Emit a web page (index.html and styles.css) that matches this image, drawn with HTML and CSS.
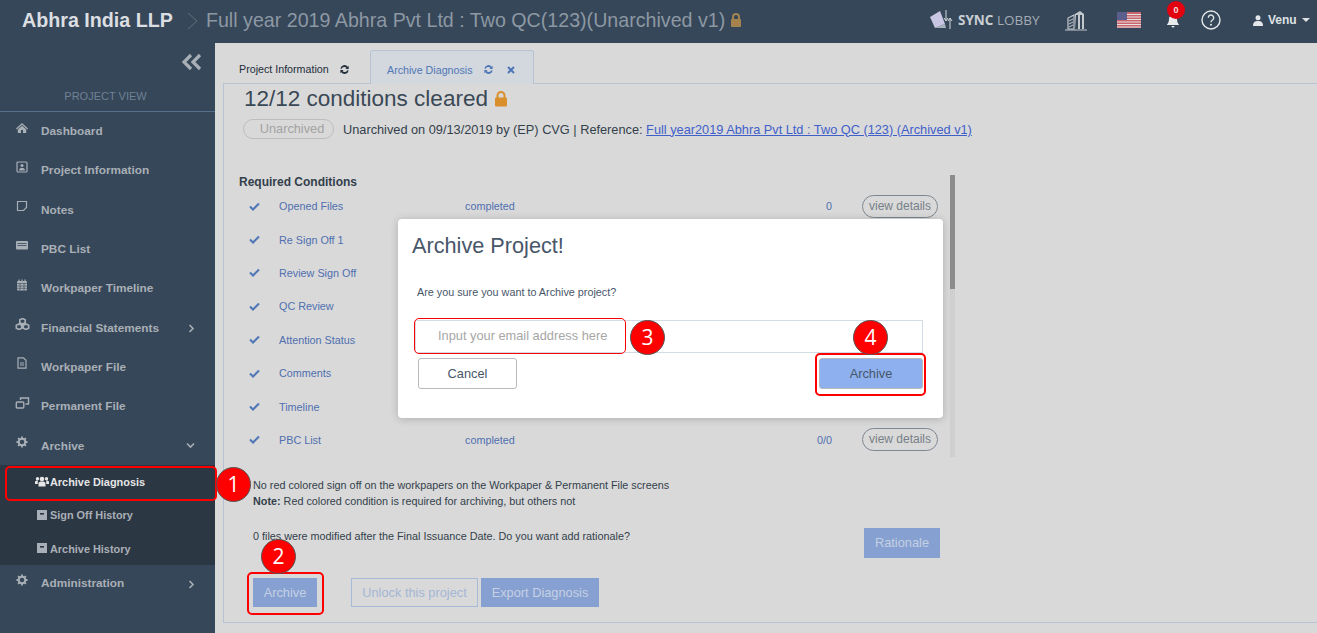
FILE: index.html
```html
<!DOCTYPE html>
<html lang="en">
<head>
<meta charset="UTF-8">
<meta name="viewport" content="width=device-width, initial-scale=1.0">
<title>Archive Diagnosis</title>
<link rel="stylesheet" href="styles.css">
</head>
<body>
<header class="topbar">
    <span class="brand">Abhra India LLP</span>
    <svg class="crumb" width="12" height="18" viewBox="0 0 12 18"><path d="M1 1l9 8-9 8" fill="none" stroke="#5f6f7f" stroke-width="1"/></svg>
    <span class="project-title">Full year 2019 Abhra Pvt Ltd : Two QC(123)(Unarchived v1)</span>
    <svg class="title-lock" width="12" height="14" viewBox="0 0 12 14"><path d="M3 6V4a3 3 0 0 1 6 0v2" fill="none" stroke="#a5834f" stroke-width="2"/><rect x="1" y="6" width="10" height="8" rx="1" fill="#a5834f"/></svg>
    <div class="top-right">
        <svg class="logo-mark" width="26" height="22" viewBox="0 0 26 22">
            <path d="M1 8l10-6 5 13-10 4z" fill="#c9c6e4"/><path d="M6 19l10-4 1 4H8z" fill="#aab2bc"/>
            <path d="M17 1v10M15 9l2 3 2-3M21 20V10M19 12l2-3 2 3" fill="none" stroke="#d5d9dd" stroke-width="1"/>
        </svg>
        <span class="logo-text"><b>SYNC</b> LOBBY</span>
        <svg class="building" width="24" height="22" viewBox="0 0 24 22">
            <path d="M1 21h22" stroke="#c3c8cd" stroke-width="1"/>
            <path d="M4 20V9l6-3v14z" fill="none" stroke="#c3c8cd" stroke-width="1.2"/>
            <path d="M11 20V5l5-3 4 3v15h-2V6h-2v14h-2V6h-2z" fill="#c3c8cd"/>
            <path d="M5 12l4-2M5 15l4-2M5 18l4-2" stroke="#c3c8cd" stroke-width="1"/>
        </svg>
        <svg class="flag" width="24" height="16" viewBox="0 0 24 16">
            <rect width="24" height="16" fill="#c9646c"/>
            <path d="M0 2.5h24M0 5h24M0 7.5h24M0 10h24M0 12.500h24M0 15h24" stroke="#e6e2e2" stroke-width="1.200"/>
            <rect width="10" height="8" fill="#5b5f8e"/>
        </svg>
        <div class="bell-wrap">
            <svg width="14" height="14" viewBox="0 0 14 14"><path d="M7 1a4 4 0 0 0-4 4c0 4-2 5-2 6h12c0-1-2-2-2-6a4 4 0 0 0-4-4zM5.500 12a1.500 1.500 0 0 0 3 0z" fill="#e9ebed"/></svg>
            <span class="bell-count">0</span>
        </div>
        <svg class="help" width="20" height="20" viewBox="0 0 20 20">
            <circle cx="10" cy="10" r="9" fill="none" stroke="#e4e7e9" stroke-width="1.400"/>
            <path d="M7.300 7.800a2.700 2.700 0 1 1 4.200 2.200c-1 .7-1.500 1.100-1.500 2.300" fill="none" stroke="#e4e7e9" stroke-width="1.400"/>
            <circle cx="10" cy="14.800" r="1" fill="#e4e7e9"/>
        </svg>
        <div class="user">
            <svg width="10" height="11" viewBox="0 0 10 11"><circle cx="5" cy="2.700" r="2.500" fill="#e4e7e9"/><path d="M0 11c0-4 2-5 5-5s5 1 5 5z" fill="#e4e7e9"/></svg>
            <span>Venu</span>
            <i class="caret"></i>
        </div>
    </div>
</header>

<div class="layout">
    <aside class="sidebar">
        <div class="collapse">
            <svg width="20" height="18" viewBox="0 0 20 18"><path d="M9 2L2 9l7 7M18 2l-7 7 7 7" fill="none" stroke="#a9afb6" stroke-width="3.200"/></svg>
        </div>
        <div class="side-title">PROJECT VIEW</div>
        <nav class="menu">
            <a class="menu-item"><svg class="mi" viewBox="0 0 12 12"><path d="M6 1L0 6.500l.8.900L6 2.800l5.200 4.600.8-.9zM1.800 7.500V11H5V8h2v3h3.200V7.500L6 3.800z" fill="#a9afb6"/></svg>Dashboard</a>
            <a class="menu-item"><svg class="mi" viewBox="0 0 12 12"><rect x="1" y="1" width="10" height="10" rx="1" fill="none" stroke="#a9afb6" stroke-width="1.200"/><circle cx="6" cy="4.500" r="1.500" fill="#a9afb6"/><path d="M3 9.500c0-2 1.500-2.500 3-2.500s3 .5 3 2.500z" fill="#a9afb6"/></svg>Project Information</a>
            <a class="menu-item"><svg class="mi" viewBox="0 0 12 12"><path d="M1.500 1.500h9v6l-3 3h-6z" fill="none" stroke="#a9afb6" stroke-width="1.200"/></svg>Notes</a>
            <a class="menu-item"><svg class="mi" viewBox="0 0 12 12"><rect x="0" y="2" width="12" height="8.500" rx="1" fill="#a9afb6"/><path d="M1.500 4.500h9M1.500 6.500h9" stroke="#364759" stroke-width=".8"/></svg>PBC List</a>
            <a class="menu-item"><svg class="mi" viewBox="0 0 12 12"><rect x="1" y="2" width="10" height="9.500" rx="1" fill="#a9afb6"/><path d="M3 .5v2.500M6 .5v2.500M9 .5v2.500" stroke="#a9afb6" stroke-width="1.200"/><path d="M1 4.500h10M1 7h10M1 9.300h10M4 4.500v7M8 4.500v7" stroke="#364759" stroke-width=".6"/></svg>Workpaper Timeline</a>
            <a class="menu-item has-arrow"><svg class="mi mi-wide" viewBox="0 0 14 12"><path d="M7 .5l2.700 1.200v3L7 6 4.300 4.700v-3zM3.500 6l2.700 1.200v3L3.500 11.500.8 10.200v-3zM10.500 6l2.700 1.200v3l-2.700 1.300-2.700-1.300v-3z" fill="#364759" stroke="#a9afb6" stroke-width="1.600"/></svg>Financial Statements<svg class="arrow" width="7" height="9" viewBox="0 0 7 9"><path d="M1.500 1l3.500 3.500L1.500 8" fill="none" stroke="#a9afb6" stroke-width="1.600"/></svg></a>
            <a class="menu-item"><svg class="mi" viewBox="0 0 12 12"><path d="M2 .8h5.500L10 3.300V11.200H2z" fill="none" stroke="#a9afb6" stroke-width="1.200"/><path d="M4 6h4M4 8h4" stroke="#a9afb6" stroke-width="1.200"/></svg>Workpaper File</a>
            <a class="menu-item"><svg class="mi mi-wide" viewBox="0 0 14 12"><rect x=".8" y="5" width="7.500" height="6" rx="1" fill="none" stroke="#a9afb6" stroke-width="1.400"/><path d="M5 3V1h8v6h-3" fill="none" stroke="#a9afb6" stroke-width="1.400"/></svg>Permanent File</a>
            <a class="menu-item has-arrow"><svg class="mi" viewBox="0 0 12 12"><circle cx="6" cy="6" r="3.300" fill="none" stroke="#a9afb6" stroke-width="2"/><path d="M6 .5v2M6 9.500v2M.5 6h2M9.500 6h2M2.100 2.100l1.400 1.400M8.500 8.500l1.400 1.400M2.100 9.900l1.400-1.400M8.500 3.500l1.400-1.400" stroke="#a9afb6" stroke-width="1.800"/></svg>Archive<svg class="arrow" width="9" height="7" viewBox="0 0 9 7"><path d="M1 1.500l3.500 3.500L8 1.500" fill="none" stroke="#a9afb6" stroke-width="1.600"/></svg></a>
            <div class="submenu">
                <a class="sub-item active"><svg class="si" viewBox="0 0 14 11"><circle cx="7" cy="3" r="2.300" fill="#e6e6e6"/><circle cx="2.500" cy="2.800" r="1.700" fill="#e6e6e6"/><circle cx="11.500" cy="2.800" r="1.700" fill="#e6e6e6"/><path d="M3.500 10.500V7.500c0-1.500 1.500-2 3.500-2s3.500 .5 3.500 2v3zM0 8V6c0-1 1-1.500 2.800-1.500V8zM14 8V6c0-1-1-1.500-2.800-1.500V8z" fill="#e6e6e6"/></svg>Archive Diagnosis</a>
                <a class="sub-item"><svg class="si" viewBox="0 0 14 11"><rect x="2" y="0" width="10" height="10" fill="#a9afb6"/><rect x="5" y="3" width="4" height="1.600" fill="#2c3744"/></svg>Sign Off History</a>
                <a class="sub-item"><svg class="si" viewBox="0 0 14 11"><rect x="2" y="0" width="10" height="10" fill="#a9afb6"/><rect x="5" y="3" width="4" height="1.600" fill="#2c3744"/></svg>Archive History</a>
            </div>
            <a class="menu-item has-arrow last"><svg class="mi" viewBox="0 0 12 12"><circle cx="6" cy="6" r="3.300" fill="none" stroke="#a9afb6" stroke-width="2"/><path d="M6 .5v2M6 9.500v2M.5 6h2M9.500 6h2M2.100 2.100l1.400 1.400M8.500 8.500l1.400 1.400M2.100 9.900l1.400-1.400M8.500 3.500l1.400-1.400" stroke="#a9afb6" stroke-width="1.800"/></svg>Administration<svg class="arrow" width="7" height="9" viewBox="0 0 7 9"><path d="M1.500 1l3.500 3.500L1.500 8" fill="none" stroke="#a9afb6" stroke-width="1.600"/></svg></a>
        </nav>
    </aside>

    <main class="content">
        <div class="tabs">
            <div class="tab">Project Information
                <svg class="sync" viewBox="0 0 12 12"><path d="M1.500 5a4.500 4.500 0 0 1 8-2l1-1v3.500H7l1.200-1.200A3 3 0 0 0 3 5.200zM10.500 7a4.500 4.500 0 0 1-8 2l-1 1V6.500H5L3.800 7.700A3 3 0 0 0 9 6.800z" fill="#222e3a"/></svg>
            </div>
            <div class="tab tab-active">Archive Diagnosis
                <svg class="sync" viewBox="0 0 12 12"><path d="M1.500 5a4.500 4.500 0 0 1 8-2l1-1v3.500H7l1.200-1.200A3 3 0 0 0 3 5.200zM10.500 7a4.500 4.500 0 0 1-8 2l-1 1V6.500H5L3.800 7.700A3 3 0 0 0 9 6.800z" fill="#4f76b5"/></svg>
                <svg class="close" viewBox="0 0 8 8"><path d="M1 1l6 6M7 1L1 7" stroke="#4f76b5" stroke-width="2"/></svg>
            </div>
        </div>
        <section class="panel">
            <h1 class="cleared">12/12 conditions cleared
                <svg width="14" height="16" viewBox="0 0 14 16"><path d="M3.500 7V4.500a3.500 3.500 0 0 1 7 0V7" fill="none" stroke="#d98f2b" stroke-width="2"/><rect x="1" y="6.500" width="12" height="9" rx="1" fill="#d98f2b"/></svg>
            </h1>
            <div class="status-line">
                <span class="pill">Unarchived</span>
                <span>Unarchived on 09/13/2019 by (EP) CVG | Reference: <a class="ref">Full year2019 Abhra Pvt Ltd : Two QC (123) (Archived v1)</a></span>
            </div>
            <div class="req-wrap">
                <div class="req-table">
                    <h2 class="req-title">Required Conditions</h2>
                    <div class="cond"><svg class="chk" viewBox="0 0 11 9"><path d="M1 4.500l3 3 6-6" fill="none" stroke="#4f76b5" stroke-width="2"/></svg><span class="cond-name">Opened Files</span><span class="cond-status">completed</span><span class="cond-count">0</span><span class="details">view details</span></div>
                    <div class="cond"><svg class="chk" viewBox="0 0 11 9"><path d="M1 4.500l3 3 6-6" fill="none" stroke="#4f76b5" stroke-width="2"/></svg><span class="cond-name">Re Sign Off 1</span></div>
                    <div class="cond"><svg class="chk" viewBox="0 0 11 9"><path d="M1 4.500l3 3 6-6" fill="none" stroke="#4f76b5" stroke-width="2"/></svg><span class="cond-name">Review Sign Off</span></div>
                    <div class="cond"><svg class="chk" viewBox="0 0 11 9"><path d="M1 4.500l3 3 6-6" fill="none" stroke="#4f76b5" stroke-width="2"/></svg><span class="cond-name">QC Review</span></div>
                    <div class="cond"><svg class="chk" viewBox="0 0 11 9"><path d="M1 4.500l3 3 6-6" fill="none" stroke="#4f76b5" stroke-width="2"/></svg><span class="cond-name">Attention Status</span></div>
                    <div class="cond"><svg class="chk" viewBox="0 0 11 9"><path d="M1 4.500l3 3 6-6" fill="none" stroke="#4f76b5" stroke-width="2"/></svg><span class="cond-name">Comments</span></div>
                    <div class="cond"><svg class="chk" viewBox="0 0 11 9"><path d="M1 4.500l3 3 6-6" fill="none" stroke="#4f76b5" stroke-width="2"/></svg><span class="cond-name">Timeline</span></div>
                    <div class="cond"><svg class="chk" viewBox="0 0 11 9"><path d="M1 4.500l3 3 6-6" fill="none" stroke="#4f76b5" stroke-width="2"/></svg><span class="cond-name">PBC List</span><span class="cond-status">completed</span><span class="cond-count">0/0</span><span class="details">view details</span></div>
                </div>
                <div class="scrollbar"><div class="thumb"></div></div>
            </div>
            <p class="note">No red colored sign off on the workpapers on the Workpaper &amp; Permanent File screens<br><b>Note:</b> Red colored condition is required for archiving, but others not</p>
            <div class="rationale-row">
                <span>0 files were modified after the Final Issuance Date. Do you want add rationale?</span>
                <button class="btn btn-fill rationale">Rationale</button>
            </div>
            <div class="actions">
                <button class="btn btn-fill archive-btn">Archive</button>
                <button class="btn btn-line">Unlock this project</button>
                <button class="btn btn-fill">Export Diagnosis</button>
            </div>
        </section>
    </main>
</div>

<div class="modal">
    <h3 class="modal-title">Archive Project!</h3>
    <p class="modal-text">Are you sure you want to Archive project?</p>
    <input class="modal-input" type="text" placeholder="Input your email address here">
    <div class="modal-actions">
        <button class="modal-btn">Cancel</button>
        <button class="modal-btn modal-primary">Archive</button>
    </div>
</div>

<!-- tutorial markup over the screenshot -->
<div class="mark mark-a"></div>
<div class="mark mark-b"></div>
<div class="mark mark-c"></div>
<div class="mark mark-d"></div>
<div class="num num-1">1</div>
<div class="num num-2">2</div>
<div class="num num-3">3</div>
<div class="num num-4">4</div>
</body>
</html>
```

FILE: styles.css
```css
* {
    box-sizing: border-box;
}
html, body {
    height: 633px;
    overflow: hidden;
}
body {
    margin: 0;
    font-family: 'Liberation Sans', Arial, sans-serif;
    background-color: #d9d9d9;
    color: #3a4856;
}
svg {
    display: block;
    flex: none;
}

/* top bar */
.topbar {
    height: 43px;
    background-color: #364759;
    display: flex;
    align-items: center;
    padding-left: 22px;
    padding-bottom: 3px;
}
.brand {
    font-size: 19.700px;
    font-weight: bold;
    color: #dcdfe2;
}
.crumb {
    margin: 2px 7px 0 14px;
}
.project-title {
    font-size: 19.650px;
    color: #8d98a3;
}
.title-lock {
    margin-left: 5px;
}
.top-right {
    margin-left: auto;
    display: flex;
    align-items: center;
    height: 100%;
}
.logo-mark {
    margin-right: 3px;
}
.logo-text {
    font-family: 'Open Sans', sans-serif;
    font-size: 13.500px;
    color: #a3acb5;
    width: 84px;
}
.logo-text b {
    color: #c9ced3;
}
.building {
    margin-left: 22px;
}
.flag {
    margin-left: 29px;
}
.bell-wrap {
    position: relative;
    margin-left: 25px;
    margin-top: 1px;
}
.bell-count {
    position: absolute;
    left: 1px;
    top: -13px;
    width: 18px;
    height: 18px;
    border-radius: 50%;
    background-color: #e3000f;
    color: #f3dede;
    font-size: 9px;
    font-weight: bold;
    text-align: center;
    line-height: 18px;
}
.help {
    margin-left: 21px;
}
.user {
    margin-left: 32px;
    margin-right: 6px;
    width: 58px;
    display: flex;
    align-items: center;
    gap: 5px;
    font-size: 12px;
    font-weight: bold;
    color: #dfe2e5;
}
.caret {
    border-left: 4px solid transparent;
    border-right: 4px solid transparent;
    border-top: 4px solid #dfe2e5;
}

/* sidebar */
.layout {
    display: flex;
    height: 590px;
}
.sidebar {
    width: 215px;
    flex: none;
    background-color: #364759;
}
.collapse {
    height: 40px;
    display: flex;
    justify-content: flex-end;
    align-items: center;
    padding: 0 13px 2px 0;
}
.side-title {
    height: 29px;
    border-bottom: 1px solid #55708c;
    text-align: center;
    font-size: 11px;
    color: #6f8194;
    padding: 7px 4px 0 0;
}
.menu {
    display: flex;
    flex-direction: column;
    margin-top: -0.500px;
}
.menu-item {
    height: 39.300px;
    display: flex;
    align-items: center;
    padding-left: 41px;
    position: relative;
    font-size: 11.800px;
    font-weight: bold;
    color: #a9afb6;
}
.mi {
    position: absolute;
    left: 16px;
    top: 10px;
    width: 12px;
    height: 12px;
}
.mi-wide {
    left: 15px;
    width: 15px;
}
.arrow {
    position: absolute;
    right: 20px;
    top: 16px;
}
.menu-item.last {
    margin-top: -1.500px;
}
.submenu {
    background-color: #2c3744;
    height: 100px;
}
.sub-item {
    height: 33.400px;
    display: flex;
    align-items: center;
    gap: 1px;
    padding-left: 35px;
    font-size: 10.900px;
    font-weight: bold;
    color: #a9afb6;
}
.sub-item.active {
    color: #e6e6e6;
}
.si {
    width: 14px;
    height: 11px;
}

/* main area */
.content {
    flex: 1;
    padding-left: 8px;
    min-width: 0;
}
.tabs {
    height: 41px;
    display: flex;
    align-items: flex-end;
    border-bottom: 1px solid #b7c3d3;
}
.tab {
    height: 34px;
    display: flex;
    align-items: center;
    padding: 4px 0 0 16px;
    width: 147px;
    font-size: 10.700px;
    color: #222e3a;
    margin-bottom: -1px;
}
.tab-active {
    width: 164px;
    background-color: #d3d8de;
    border: 1px solid #b7c3d3;
    border-bottom: none;
    border-radius: 3px 3px 0 0;
    color: #4f76b5;
}
.sync {
    width: 11px;
    height: 11px;
    margin-left: 10px;
}
.close {
    width: 8px;
    height: 8px;
    margin-left: 13px;
}
.panel {
    height: 539px;
    border-left: 1px solid #b7c3d3;
    border-bottom: 1px solid #b7c3d3;
    padding-left: 20px;
}
.cleared {
    margin: 0;
    height: 28px;
    padding-top: 1px;
    display: flex;
    align-items: center;
    gap: 6px;
    font-size: 22.500px;
    font-weight: normal;
    color: #3a4856;
}
.status-line {
    margin: 7px 0 0 -1px;
    height: 20px;
    display: flex;
    align-items: center;
    gap: 9px;
    font-size: 12.750px;
    color: #333f4b;
}
.pill {
    width: 91px;
    height: 20px;
    border: 1px solid #bdbdbd;
    border-radius: 10px;
    padding-left: 7px;
    text-align: center;
    line-height: 18px;
    color: #a3a3a3;
}
.ref {
    color: #3f5fc9;
    text-decoration: underline;
}
.req-wrap {
    margin-top: 36px;
    margin-left: -5px;
    display: flex;
    height: 283px;
}
.req-table {
    width: 700px;
}
.req-title {
    margin: 0;
    height: 14.500px;
    font-size: 12px;
    font-weight: bold;
    line-height: 14px;
    color: #333f4b;
}
.cond {
    height: 33.400px;
    display: flex;
    align-items: center;
    font-size: 10.800px;
    color: #4f6fb0;
}
.chk {
    width: 11px;
    height: 9px;
    margin-left: 10px;
}
.cond-name {
    margin-left: 19px;
    width: 186px;
}
.cond-status {
    width: 290px;
}
.cond-count {
    width: 77px;
    text-align: right;
    white-space: nowrap;
}
.details {
    margin-left: 30px;
    width: 76px;
    height: 23px;
    border: 1px solid #7f8790;
    border-radius: 12px;
    text-align: center;
    line-height: 21px;
    font-size: 12px;
    color: #777f88;
}
.scrollbar {
    width: 5px;
    margin-left: 11px;
    background-color: #cfcfcf;
    height: 282px;
}
.thumb {
    height: 114px;
    background-color: #8c8c8c;
}
.note {
    margin: 19px 0 0;
    padding-left: 9px;
    font-size: 10.800px;
    line-height: 16px;
    color: #333f4b;
}
.rationale-row {
    margin-top: 19px;
    padding-left: 9px;
    width: 696px;
    height: 43px;
    display: flex;
    justify-content: space-between;
    align-items: flex-start;
    font-size: 10.800px;
    color: #333f4b;
}
.rationale-row span {
    line-height: 16px;
}
.btn {
    height: 30px;
    font-family: inherit;
    font-size: 12.800px;
    color: #c5d0e4;
    border: none;
    padding: 0 0 1px;
}
.btn-fill {
    background-color: #85a0d1;
}
.btn-line {
    background: none;
    border: 1px solid #a8bad9;
    color: #a4b6d6;
    width: 127px;
}
.rationale {
    width: 76px;
}
.actions {
    margin-top: 7px;
    padding-left: 9px;
    display: flex;
    gap: 3px;
}
.actions .btn {
    height: 29px;
}
.archive-btn {
    width: 64px;
    margin-right: 31px;
}
.actions .btn:last-child {
    width: 118px;
}

/* dialog */
.modal {
    position: absolute;
    left: 398px;
    top: 219px;
    width: 545px;
    height: 199px;
    background-color: #fff;
    border-radius: 4px;
    box-shadow: 0 1px 8px rgba(0, 0, 0, 0.2);
    padding: 14px 20px 0 19px;
}
.modal-title {
    margin: 0 0 0 -5px;
    font-size: 21.700px;
    font-weight: normal;
    line-height: 26px;
    color: #475669;
}
.modal-text {
    margin: 27px 0 0;
    font-size: 10.800px;
    line-height: 12px;
    color: #475669;
}
.modal-input {
    display: block;
    width: 508px;
    height: 33px;
    margin: 22px 0 0 -2px;
    border: 1px solid #d3dce6;
    padding: 0 0 2px 22px;
    font-family: inherit;
    font-size: 12.800px;
    outline: none;
}
.modal-input::placeholder {
    color: #a6a6a6;
}
.modal-actions {
    display: flex;
    justify-content: space-between;
    margin: 5px 0 0 1px;
    width: 505px;
}
.modal-btn {
    width: 99px;
    height: 31px;
    background-color: #fff;
    border: 1px solid #b9b9b9;
    border-radius: 3px;
    font-family: inherit;
    font-size: 12.800px;
    color: #475669;
}
.modal-primary {
    width: 104px;
    background-color: #8eb0ee;
}

/* red annotations */
.mark {
    position: absolute;
    border: 2px solid #f00;
    border-radius: 5px;
}
.mark-a {
    left: 5px;
    top: 466px;
    width: 212px;
    height: 35px;
}
.mark-b {
    left: 247px;
    top: 572px;
    width: 77px;
    height: 43px;
}
.mark-c {
    left: 414px;
    top: 318px;
    width: 212px;
    height: 36px;
    border-width: 1px;
}
.mark-d {
    left: 815px;
    top: 353px;
    width: 111px;
    height: 43px;
}
.num {
    position: absolute;
    width: 35px;
    height: 35px;
    border-radius: 50%;
    background-color: #f00;
    border: 1px solid #555;
    color: #fff;
    font-family: 'Open Sans', sans-serif;
    font-size: 21px;
    text-align: center;
    line-height: 33px;
}
.num-1 {
    left: 216px;
    top: 467px;
}
.num-2 {
    left: 261px;
    top: 539px;
}
.num-3 {
    left: 630px;
    top: 320px;
}
.num-4 {
    left: 853px;
    top: 320px;
}
```
